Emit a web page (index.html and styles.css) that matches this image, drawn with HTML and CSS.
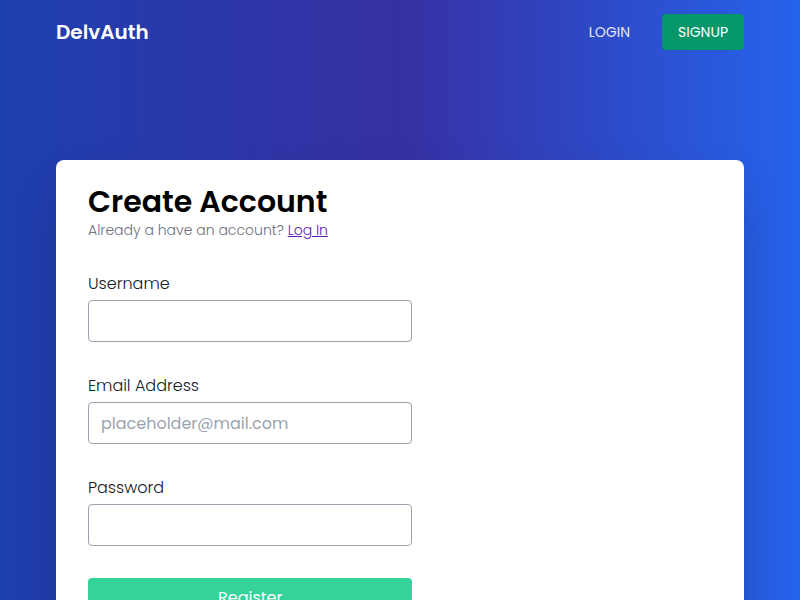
FILE: index.html
```html
<!DOCTYPE html>
<html lang="en">
<head>
<meta charset="utf-8">
<meta name="viewport" content="width=device-width, initial-scale=1">
<title>DelvAuth</title>
<link rel="stylesheet" href="styles.css">
</head>
<body>
<header class="navbar">
  <a class="brand" href="#">DelvAuth</a>
  <nav class="nav-links">
    <a class="nav-link" href="#">LOGIN</a>
    <a class="nav-link nav-button" href="#">SIGNUP</a>
  </nav>
</header>
<main class="card">
  <h1 class="title">Create Account</h1>
  <p class="subtitle">Already a have an account? <a class="login-link" href="#">Log In</a></p>
  <form class="form">
    <div class="field">
      <label for="username">Username</label>
      <input id="username" type="text">
    </div>
    <div class="field">
      <label for="email">Email Address</label>
      <input id="email" type="email" placeholder="placeholder@mail.com">
    </div>
    <div class="field">
      <label for="password">Password</label>
      <input id="password" type="password">
    </div>
    <button class="submit" type="submit">Register</button>
  </form>
</main>
</body>
</html>
```
FILE: styles.css
```css
* {
  box-sizing: border-box;
}

body {
  min-height: 100vh;
  margin: 0;
  padding: 0 56px;
  font-family: Poppins, Lato, "Open Sans", sans-serif;
  font-size: 16px;
  line-height: 24px;
  color: #000;
  background: linear-gradient(to right, #1e40af, #3730a3, #2563eb);
}

.navbar {
  display: flex;
  align-items: center;
  justify-content: space-between;
  height: 64px;
}

.brand {
  color: #fff;
  font-size: 20px;
  font-weight: 600;
  text-decoration: none;
}

.nav-links {
  display: flex;
  align-items: center;
  gap: 16px;
}

.nav-link {
  padding: 8px 16px;
  border-radius: 4px;
  color: #e5e7eb;
  font-size: 14px;
  line-height: 20px;
  text-decoration: none;
}

.nav-button {
  color: #fff;
  background: #059669;
}

.card {
  margin-top: 96px;
  padding: 24px 32px 32px;
  border-radius: 8px;
  background: #fff;
  box-shadow: 0 25px 50px -12px rgba(0, 0, 0, 0.25);
}

.title {
  margin: 0;
  font-size: 30px;
  font-weight: 600;
  line-height: 36px;
}

.subtitle {
  margin: 0;
  color: #6b7280;
  font-size: 14px;
  font-weight: 300;
  line-height: 20px;
}

.login-link {
  color: #5b21b6;
}

.form {
  display: grid;
  gap: 32px;
  width: 52%;
  margin-top: 32px;
}

.field {
  display: grid;
  gap: 4px;
}

.field label {
  color: #111827;
  font-weight: 300;
}

.field input {
  width: 100%;
  height: 42px;
  padding: 8px 12px;
  border: 1px solid #9ca3af;
  border-radius: 4px;
  background: #fff;
  font: inherit;
}

.field input::placeholder {
  color: #9ca3af;
}

.submit {
  height: 40px;
  border: 0;
  border-radius: 4px;
  color: #fff;
  background: #34d399;
  font: inherit;
}
```
